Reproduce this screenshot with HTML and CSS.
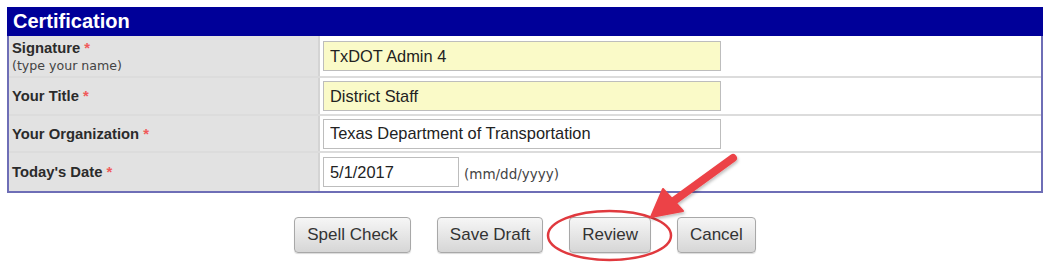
FILE: index.html
```html
<!DOCTYPE html>
<html lang="en">
<head>
    <meta charset="UTF-8">
    <title>Certification</title>
    <link rel="stylesheet" href="styles.css">
</head>
<body>
    <div class="page">
        <div class="panel">
            <div class="panel-title">Certification</div>
            <div class="row row-sig">
                <div class="label">
                    <strong>Signature <span class="req">*</span></strong>
                    <span class="hint">(type your name)</span>
                </div>
                <div class="value"><input class="field required-field" type="text" value="TxDOT Admin 4"></div>
            </div>
            <div class="row">
                <div class="label"><strong>Your Title <span class="req">*</span></strong></div>
                <div class="value"><input class="field required-field" type="text" value="District Staff"></div>
            </div>
            <div class="row row-org">
                <div class="label"><strong>Your Organization <span class="req">*</span></strong></div>
                <div class="value"><input class="field" type="text" value="Texas Department of Transportation"></div>
            </div>
            <div class="row row-last">
                <div class="label"><strong>Today's Date <span class="req">*</span></strong></div>
                <div class="value">
                    <input class="field date-field" type="text" value="5/1/2017">
                    <span class="hint date-hint">(mm/dd/yyyy)</span>
                </div>
            </div>
        </div>

        <div class="actions">
            <button class="btn">Spell Check</button>
            <button class="btn">Save Draft</button>
            <button class="btn">Review</button>
            <button class="btn">Cancel</button>
        </div>

        <svg class="callout" width="1050" height="267" viewBox="0 0 1050 267">
            <defs>
                <filter id="shade" x="-20%" y="-20%" width="140%" height="140%">
                    <feDropShadow dx="1" dy="2" stdDeviation="1.5" flood-color="#000" flood-opacity="0.25"/>
                </filter>
            </defs>
            <ellipse cx="609.5" cy="235.5" rx="61.5" ry="24.5" fill="none" stroke="#e0393e" stroke-width="2.5"/>
            <g filter="url(#shade)" fill="#ec4347" stroke="#ec4347">
                <line x1="733" y1="158" x2="671" y2="203" stroke-width="8" stroke-linecap="round"/>
                <polygon points="663,189 683,211 651,217" stroke-width="2" stroke-linejoin="round"/>
            </g>
        </svg>
    </div>
</body>
</html>
```

FILE: styles.css
```css
body {
    margin: 0;
    background-color: #ffffff;
    font-family: "Liberation Sans", Arial, sans-serif;
    color: #222222;
}
.page {
    position: relative;
    width: 1050px;
    height: 267px;
    padding: 7px 7px 0 7px;
    box-sizing: border-box;
}
.panel {
    border: 2px solid #6e6eb6;
    border-top: none;
    background-color: #ffffff;
}
.panel-title {
    background-color: #000099;
    color: #ffffff;
    font-weight: bold;
    font-size: 20px;
    height: 29px;
    line-height: 28px;
    margin: 0 -2px;
    padding-left: 6px;
}
.row {
    display: grid;
    grid-template-columns: 311px 1fr;
    height: 36px;
    border-bottom: 2px solid #dcdcdc;
}
.row-sig {
    height: 40px;
}
.row-org {
    height: 35px;
}
.row-last {
    border-bottom: none;
    height: 38px;
}
.label {
    background-color: #e2e2e2;
    border-right: 2px solid #d4d4d4;
    display: flex;
    flex-direction: column;
    justify-content: center;
    padding-left: 3px;
    font-size: 14.8px;
}
.label strong {
    color: #2b2b2b;
}
.req {
    color: #f05a5a;
}
.hint {
    font-family: "DejaVu Sans", Verdana, sans-serif;
    font-size: 12.6px;
    color: #444444;
    margin-top: 2px;
}
.value {
    display: flex;
    align-items: center;
    padding-left: 3px;
}
.field {
    width: 398px;
    height: 30px;
    box-sizing: border-box;
    border: 1px solid #bdbdbd;
    padding: 0 6px;
    font-family: "Liberation Sans", Arial, sans-serif;
    font-size: 16.4px;
    color: #222222;
    background-color: #ffffff;
    outline: none;
}
.required-field {
    background-color: #fafac8;
}
.date-field {
    width: 136px;
}
.date-hint {
    margin: 3px 0 0 5px;
    font-size: 13.5px;
}
.actions {
    display: flex;
    justify-content: center;
    gap: 26px;
    margin-top: 24px;
}
.btn {
    height: 36px;
    padding: 0 12px;
    font-family: "Liberation Sans", Arial, sans-serif;
    font-size: 17px;
    color: #333333;
    border: 1px solid #a8a8a8;
    border-radius: 4px;
    background: linear-gradient(#f6f6f6, #d6d6d6);
    box-shadow: 0 1px 1px rgba(0, 0, 0, 0.15);
}
.callout {
    position: absolute;
    top: 0;
    left: 0;
    pointer-events: none;
}
```
